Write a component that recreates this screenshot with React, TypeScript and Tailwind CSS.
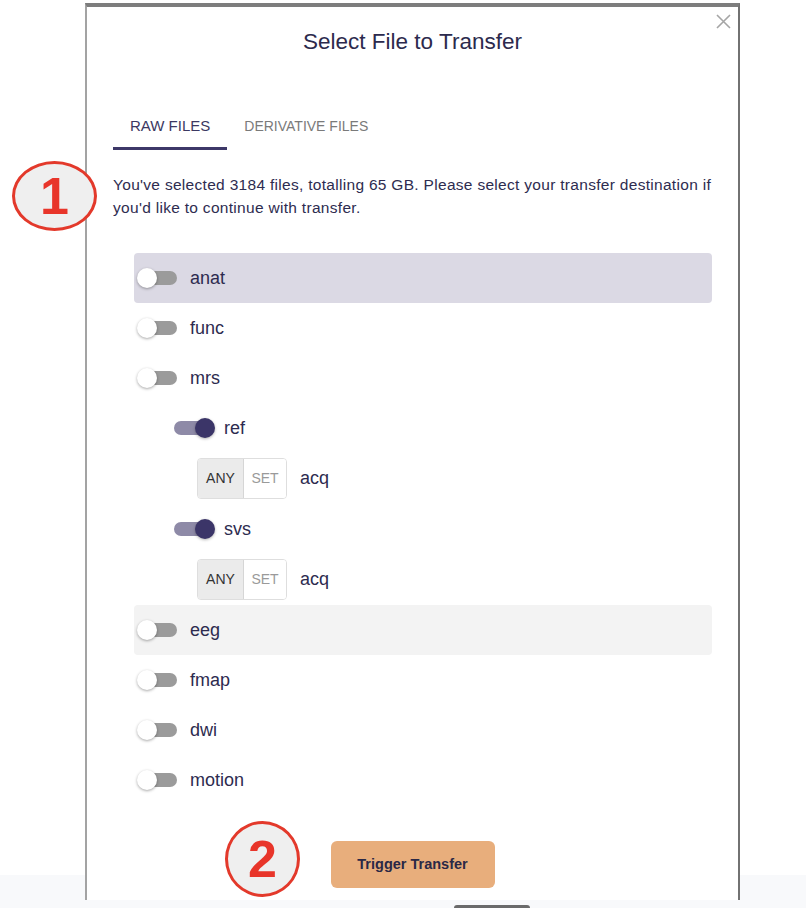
import React from "react";

const font = { fontFamily: '"Liberation Sans", Arial, sans-serif' };

type Row =
  | { kind: "off"; label: string; bg?: string }
  | { kind: "on"; label: string }
  | { kind: "acq" };

const rows: Row[] = [
  { kind: "off", label: "anat", bg: "bg-[#dbd9e4]" },
  { kind: "off", label: "func" },
  { kind: "off", label: "mrs" },
  { kind: "on", label: "ref" },
  { kind: "acq" },
  { kind: "on", label: "svs" },
  { kind: "acq" },
  { kind: "off", label: "eeg", bg: "bg-[#f3f3f3]" },
  { kind: "off", label: "fmap" },
  { kind: "off", label: "dwi" },
  { kind: "off", label: "motion" },
];

const OffToggle = () => (
  <div className="relative w-[40px] h-[20px] shrink-0">
    <div className="absolute left-[4px] right-0 top-[3px] h-[14px] rounded-full bg-[#9b9b9b]" />
    <div className="absolute left-0 top-0 w-5 h-5 rounded-full bg-white shadow-[0_1px_3px_rgba(0,0,0,0.35)]" />
  </div>
);

const OnToggle = () => (
  <div className="relative w-[41px] h-[20px] shrink-0">
    <div className="absolute left-0 right-[4px] top-[3px] h-[14px] rounded-full bg-[#8e8aa7]" />
    <div className="absolute right-0 top-0 w-5 h-5 rounded-full bg-[#3b3568] shadow-[0_1px_3px_rgba(0,0,0,0.3)]" />
  </div>
);

const Circle = ({ n, className }: { n: string; className: string }) => (
  <div
    className={`absolute flex items-center justify-center rounded-[50%] border-[3px] border-[#e3392b] bg-[#efefef] text-[#e8352a] font-bold text-[52px] leading-none ${className}`}
    style={font}
  >
    {n}
  </div>
);

export default function App() {
  return (
    <div
      className="relative w-[806px] h-[908px] overflow-hidden bg-[linear-gradient(to_bottom,#ffffff_875px,#f8f9fb_875px)] pt-[3px] pl-[85px]"
      style={font}
    >
      <div className="relative w-[655px] h-[897px] bg-white border-l-2 border-r-2 border-t-4 border-l-[#a3a3a3] border-r-[#727272] border-t-[#7d7d7d] flex flex-col">
        <button className="absolute right-[7px] top-[7px] w-[15px] h-[15px]">
          <svg width="15" height="15" viewBox="0 0 15 15">
            <path d="M1 1L14 14M14 1L1 14" stroke="#a5a5a5" strokeWidth="1.6" />
          </svg>
        </button>

        <h2 className="pt-[20px] text-center text-[22.5px] leading-[30px] text-[#2c2a4d]">
          Select File to Transfer
        </h2>

        <div className="px-[26px] mt-[45px] flex">
          <div className="h-[48px] px-[17px] flex items-center border-b-[3px] border-[#3d3868] text-[15px] text-[#3b3862] pt-[3px]">
            RAW FILES
          </div>
          <div className="h-[48px] px-[17px] flex items-center border-b-[3px] border-transparent text-[14px] text-[#7a7a7a] pt-[3px]">
            DERIVATIVE FILES
          </div>
        </div>

        <div className="px-[26px] flex flex-col">
          <p className="mt-[23px] text-[15.5px] leading-[23px] tracking-[0.3px] text-[#2e2c50]">
            <span className="block whitespace-nowrap">
              You've selected 3184 files, totalling 65 GB. Please select your transfer destination if
            </span>
            <span className="block">you'd like to continue with transfer.</span>
          </p>

          <div className="mt-[34px] ml-[21px] flex flex-col text-[18px] text-[#2d2b4f]">
            {rows.map((r, i) => {
              if (r.kind === "off")
                return (
                  <div key={i} className={`h-[50px] pl-[3px] flex items-center rounded-[4px] ${r.bg ?? ""}`}>
                    <OffToggle />
                    <span className="ml-[13px]">{r.label}</span>
                  </div>
                );
              if (r.kind === "on")
                return (
                  <div key={i} className="h-[50px] pl-[40px] flex items-center">
                    <OnToggle />
                    <span className="ml-[9px]">{r.label}</span>
                  </div>
                );
              return (
                <div key={i} className="h-[51px] pl-[63px] flex items-center">
                  <div className="flex h-[41px] w-[90px] rounded-[4px] border border-[#dedede] overflow-hidden text-[14px]">
                    <div className="w-[46px] flex items-center justify-center bg-[#ebebeb] text-[#333333] border-r border-[#d6d6d6]">
                      ANY
                    </div>
                    <div className="flex-1 flex items-center justify-center bg-white text-[#9a9a9a]">
                      SET
                    </div>
                  </div>
                  <span className="ml-[13px]">acq</span>
                </div>
              );
            })}
          </div>

          <button className="mt-[36px] self-center w-[164px] h-[47px] rounded-[6px] bg-[#e8ae7c] text-[14.5px] font-bold text-[#2a2846]">
            Trigger Transfer
          </button>
        </div>
      </div>

      <div className="ml-[369px] mt-[5px] w-[76px] h-[3px] rounded-t-sm bg-[#6b6b6b]" />

      <Circle n="1" className="left-[12px] top-[161px] w-[85px] h-[70px]" />
      <Circle n="2" className="left-[225px] top-[821px] w-[75px] h-[76px]" />
    </div>
  );
}
